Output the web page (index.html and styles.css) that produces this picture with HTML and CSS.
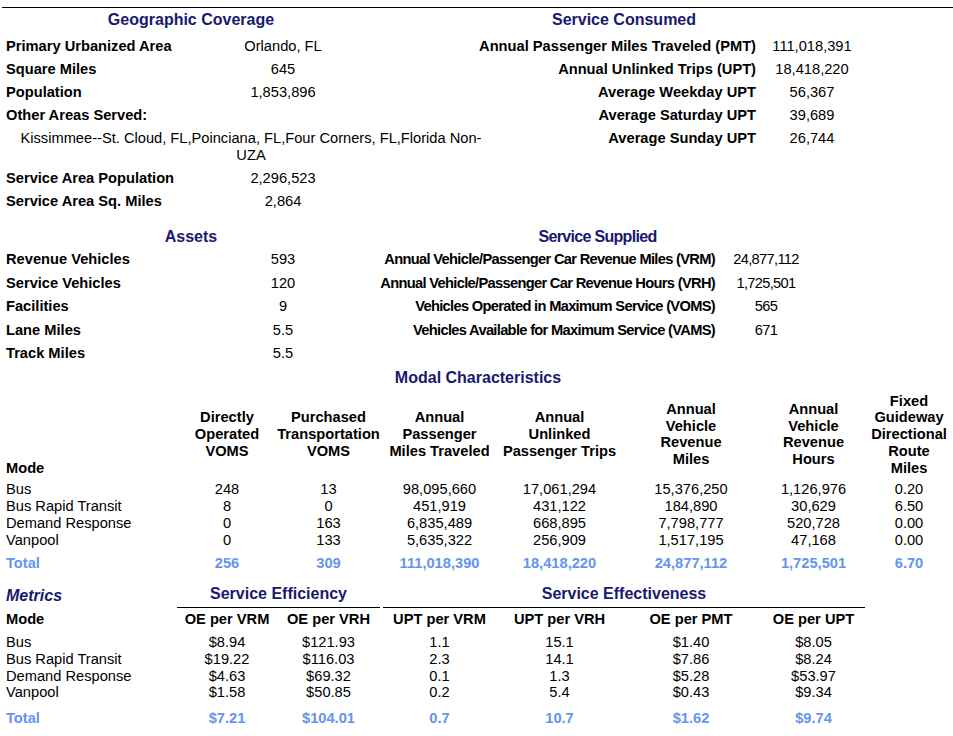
FILE: index.html
```html
<!DOCTYPE html>
<html>
<head>
<meta charset="utf-8">
<title>Agency Profile</title>
<link rel="stylesheet" href="styles.css">
</head>
<body>
<div class="page">
  <div class="rule"></div>

  <div class="band band-top">
    <div class="left">
      <div class="head left-head">Geographic Coverage</div>
      <div class="kv"><span class="lbl">Primary Urbanized Area</span><span class="val">Orlando, FL</span></div>
      <div class="kv"><span class="lbl">Square Miles</span><span class="val">645</span></div>
      <div class="kv"><span class="lbl">Population</span><span class="val">1,853,896</span></div>
      <div class="kv"><span class="lbl">Other Areas Served:</span></div>
      <div class="areas">Kissimmee--St. Cloud, FL,Poinciana, FL,Four Corners, FL,Florida Non-<br>UZA</div>
      <div class="kv"><span class="lbl">Service Area Population</span><span class="val">2,296,523</span></div>
      <div class="kv"><span class="lbl">Service Area Sq. Miles</span><span class="val">2,864</span></div>
    </div>
    <div class="consumed">
      <div class="head consumed-head">Service Consumed</div>
      <div class="kv-r"><span class="lbl">Annual Passenger Miles Traveled (PMT)</span><span class="val">111,018,391</span></div>
      <div class="kv-r"><span class="lbl">Annual Unlinked Trips (UPT)</span><span class="val">18,418,220</span></div>
      <div class="kv-r"><span class="lbl">Average Weekday UPT</span><span class="val">56,367</span></div>
      <div class="kv-r"><span class="lbl">Average Saturday UPT</span><span class="val">39,689</span></div>
      <div class="kv-r"><span class="lbl">Average Sunday UPT</span><span class="val">26,744</span></div>
    </div>
  </div>

  <div class="band band-mid">
    <div class="left left-narrow">
      <div class="head left-head">Assets</div>
      <div class="kv kv-tall"><span class="lbl">Revenue Vehicles</span><span class="val">593</span></div>
      <div class="kv kv-tall"><span class="lbl">Service Vehicles</span><span class="val">120</span></div>
      <div class="kv kv-tall"><span class="lbl">Facilities</span><span class="val">9</span></div>
      <div class="kv kv-tall"><span class="lbl">Lane Miles</span><span class="val">5.5</span></div>
      <div class="kv kv-tall"><span class="lbl">Track Miles</span><span class="val">5.5</span></div>
    </div>
    <div class="supplied">
      <div class="head supplied-head">Service Supplied</div>
      <div class="kv-s"><span class="lbl">Annual Vehicle/Passenger Car Revenue Miles (VRM)</span><span class="val">24,877,112</span></div>
      <div class="kv-s"><span class="lbl">Annual Vehicle/Passenger Car Revenue Hours (VRH)</span><span class="val">1,725,501</span></div>
      <div class="kv-s"><span class="lbl">Vehicles Operated in Maximum Service (VOMS)</span><span class="val">565</span></div>
      <div class="kv-s"><span class="lbl">Vehicles Available for Maximum Service (VAMS)</span><span class="val">671</span></div>
    </div>
  </div>

  <div class="head modal-title">Modal Characteristics</div>

  <div class="cols modal-head">
    <div class="mode-h">Mode</div>
    <div class="ch">Directly<br>Operated<br>VOMS</div>
    <div class="ch">Purchased<br>Transportation<br>VOMS</div>
    <div class="ch">Annual<br>Passenger<br>Miles Traveled</div>
    <div class="ch">Annual<br>Unlinked<br>Passenger Trips</div>
    <div class="ch">Annual<br>Vehicle<br>Revenue<br>Miles</div>
    <div class="ch">Annual<br>Vehicle<br>Revenue<br>Hours</div>
    <div class="ch">Fixed<br>Guideway<br>Directional<br>Route<br>Miles</div>
  </div>

  <div class="cols body-rows">
    <div>Bus</div><div class="c">248</div><div class="c">13</div><div class="c">98,095,660</div><div class="c">17,061,294</div><div class="c">15,376,250</div><div class="c">1,126,976</div><div class="c">0.20</div>
    <div>Bus Rapid Transit</div><div class="c">8</div><div class="c">0</div><div class="c">451,919</div><div class="c">431,122</div><div class="c">184,890</div><div class="c">30,629</div><div class="c">6.50</div>
    <div>Demand Response</div><div class="c">0</div><div class="c">163</div><div class="c">6,835,489</div><div class="c">668,895</div><div class="c">7,798,777</div><div class="c">520,728</div><div class="c">0.00</div>
    <div>Vanpool</div><div class="c">0</div><div class="c">133</div><div class="c">5,635,322</div><div class="c">256,909</div><div class="c">1,517,195</div><div class="c">47,168</div><div class="c">0.00</div>
  </div>

  <div class="cols total-row modal-total">
    <div>Total</div><div class="c">256</div><div class="c">309</div><div class="c">111,018,390</div><div class="c">18,418,220</div><div class="c">24,877,112</div><div class="c">1,725,501</div><div class="c">6.70</div>
  </div>

  <div class="cols metrics-head">
    <div class="head metrics-title">Metrics</div>
    <div class="head group eff">Service Efficiency</div>
    <div class="head group effect">Service Effectiveness</div>
  </div>

  <div class="cols metrics-sub">
    <div>Mode</div>
    <div class="c">OE per VRM</div>
    <div class="c">OE per VRH</div>
    <div class="c">UPT per VRM</div>
    <div class="c">UPT per VRH</div>
    <div class="c">OE per PMT</div>
    <div class="c">OE per UPT</div>
  </div>

  <div class="cols body-rows metrics-body">
    <div>Bus</div><div class="c">$8.94</div><div class="c">$121.93</div><div class="c">1.1</div><div class="c">15.1</div><div class="c">$1.40</div><div class="c">$8.05</div><div></div>
    <div>Bus Rapid Transit</div><div class="c">$19.22</div><div class="c">$116.03</div><div class="c">2.3</div><div class="c">14.1</div><div class="c">$7.86</div><div class="c">$8.24</div><div></div>
    <div>Demand Response</div><div class="c">$4.63</div><div class="c">$69.32</div><div class="c">0.1</div><div class="c">1.3</div><div class="c">$5.28</div><div class="c">$53.97</div><div></div>
    <div>Vanpool</div><div class="c">$1.58</div><div class="c">$50.85</div><div class="c">0.2</div><div class="c">5.4</div><div class="c">$0.43</div><div class="c">$9.34</div><div></div>
  </div>

  <div class="cols total-row metrics-total">
    <div>Total</div><div class="c">$7.21</div><div class="c">$104.01</div><div class="c">0.7</div><div class="c">10.7</div><div class="c">$1.62</div><div class="c">$9.74</div>
  </div>
</div>
</body>
</html>
```

FILE: styles.css
```css
html, body {
  margin: 0;
  padding: 0;
  background: #ffffff;
}

body {
  font-family: "Liberation Sans", Arial, sans-serif;
  font-size: 14.67px;
  color: #000000;
}

.page {
  width: 953px;
}

.rule {
  margin: 7px 0 0 2px;
  height: 1px;
  background: #000000;
}

.head {
  font-size: 16px;
  font-weight: bold;
  color: #191970;
  line-height: 18px;
}

.band {
  display: flex;
}

/* ---------- left key/value blocks ---------- */
.left {
  width: 490px;
  padding-left: 6px;
  flex: none;
}

.left-narrow {
  width: 370px;
}

.left-head {
  width: 370px;
  text-align: center;
}

.band-top .head {
  padding: 3px 0 6px;
}

.band-mid .head {
  padding: 15px 0 2px;
}

.kv {
  display: flex;
  align-items: center;
  height: 23px;
  line-height: 17px;
}

.kv-tall {
  height: 23.5px;
}

.lbl {
  font-weight: bold;
  white-space: nowrap;
}

.kv .lbl {
  width: 184px;
}

.kv .val {
  width: 186px;
  text-align: center;
}

.areas {
  padding: 3px 0;
  line-height: 17px;
  text-align: center;
}

/* ---------- service consumed ---------- */
.consumed {
  width: 366px;
  flex: none;
}

.consumed-head {
  width: 256px;
  text-align: center;
}

.kv-r,
.kv-s {
  display: flex;
  align-items: center;
  line-height: 17px;
}

.kv-r {
  height: 23px;
}

.kv-s {
  height: 23.5px;
}

.kv-r .lbl,
.kv-s .lbl {
  display: flex;
  justify-content: flex-end;
  flex: none;
  padding-right: 6px;
}

.kv-r .lbl {
  width: 260px;
}

.kv-r .val {
  width: 100px;
  text-align: center;
}

/* ---------- service supplied (condensed text) ---------- */
.supplied {
  width: 435px;
  flex: none;
  letter-spacing: -0.68px;
}

.supplied-head {
  width: 247px;
  margin-left: 98px;
  text-align: center;
}

.kv-s .lbl {
  width: 339px;
}

.kv-s .val {
  width: 90px;
  text-align: center;
}

/* ---------- tables ---------- */
.modal-title {
  padding: 3px 0 0 3px;
  text-align: center;
}

.cols {
  display: grid;
  grid-template-columns: 171px 100px 103px 119px 121px 142px 103px 88px;
  padding-left: 6px;
  line-height: 16.8px;
}

.c {
  text-align: center;
  white-space: nowrap;
}

.modal-head {
  margin-top: 6px;
  font-weight: bold;
}

.mode-h {
  align-self: end;
}

.ch {
  align-self: center;
  text-align: center;
  white-space: nowrap;
}

.body-rows {
  margin-top: 5px;
}

.total-row {
  font-weight: bold;
  color: #6495ed;
}

.modal-total {
  margin-top: 6px;
}

.metrics-head {
  margin-top: 14px;
  align-items: end;
}

.metrics-title {
  font-style: italic;
  padding-bottom: 3px;
}

.group {
  text-align: center;
  padding-bottom: 4px;
  border-bottom: 1px solid #000000;
}

.eff {
  grid-column: 2 / 4;
}

.effect {
  grid-column: 4 / 8;
  margin-left: 3px;
}

.metrics-sub {
  margin-top: 3px;
  font-weight: bold;
}

.metrics-body {
  margin-top: 6px;
  line-height: 16.7px;
}

.metrics-total {
  margin-top: 9px;
}
```
